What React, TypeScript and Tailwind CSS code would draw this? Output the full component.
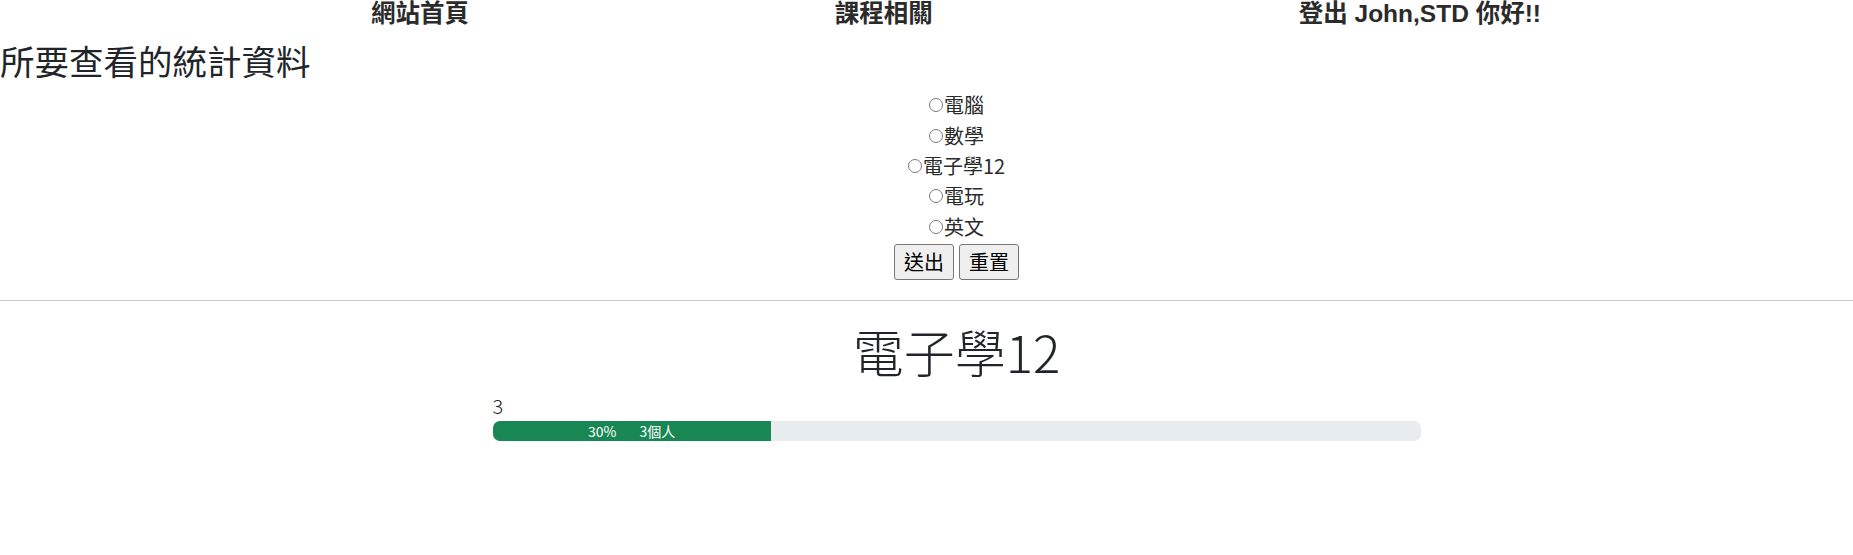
import React from "react";

const cjk = '"Noto Sans CJK TC", "Noto Sans", sans-serif';
const navFont = '"Liberation Sans", "Noto Sans CJK TC", sans-serif';

const options = ["電腦", "數學", "電子學12", "電玩", "英文"];

export default function App() {
  return (
    <div className="min-h-[555px] bg-white text-[#212529]" style={{ fontFamily: cjk }}>
      <nav
        className="flex justify-between pl-[371px] pr-[312px] text-[24.5px] font-bold leading-[28px] text-[#2b2b2b]"
        style={{ fontFamily: navFont }}
      >
        <a className="whitespace-nowrap">網站首頁</a>
        <a className="whitespace-nowrap">課程相關</a>
        <a className="whitespace-nowrap">登出 John,STD 你好!!</a>
      </nav>

      <h3 className="mt-[12px] text-[34.5px] font-normal leading-[40px]">所要查看的統計資料</h3>

      <div className="pl-[60px]">
        <form className="mt-[10px] flex flex-col items-center">
          {options.map((o) => (
            <label key={o} className="flex h-[30.4px] items-center text-[20px] leading-[30px] text-[#2a2a2a]">
              <input
                type="radio"
                name="course"
                className="m-0 box-border block h-[14px] w-[14px] min-w-[14px] shrink-0 appearance-none rounded-full border border-[#7a7a7a] bg-white"
              />
              <span className="ml-[1px]">{o}</span>
            </label>
          ))}
          <div className="mt-[2px] flex gap-[5px]">
            <button
              type="button"
              className="h-[36px] rounded-[3px] border border-[#767676] bg-[#efefef] px-[9px] text-[20px] font-normal leading-none text-black"
            >
              送出
            </button>
            <button
              type="button"
              className="h-[36px] rounded-[3px] border border-[#767676] bg-[#efefef] px-[9px] text-[20px] font-normal leading-none text-black"
            >
              重置
            </button>
          </div>
        </form>
      </div>

      <hr className="mt-[20px] border-0 border-t border-[#c9cacb]" />

      <div className="pl-[60px]">
        <h1 className="mt-[22px] text-center text-[51px] font-light leading-[56px]">電子學12</h1>
        <div className="mx-auto mt-[15px] w-[928px]">
          <div className="text-[20px] font-light leading-[24px]">3</div>
          <div className="mt-[3px] flex h-[20px] overflow-hidden rounded-[7px] bg-[#e9ecef]">
            <div
              className="flex h-full items-center justify-center bg-[#198754] text-[14px] leading-none text-white"
              style={{ width: "30%" }}
            >
              <span>30%</span>
              <span className="ml-[23px]">3個人</span>
            </div>
          </div>
        </div>
      </div>
    </div>
  );
}
